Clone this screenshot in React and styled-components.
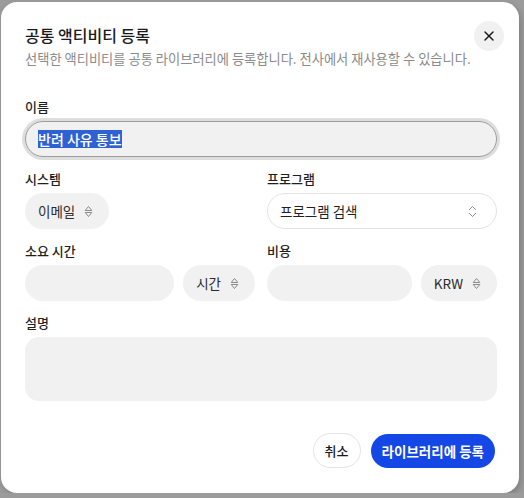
import styled, { createGlobalStyle } from "styled-components";
import { X, ChevronsUpDown } from "lucide-react";

const GlobalStyle = createGlobalStyle`
  html, body {
    margin: 0;
    padding: 0;
    background: #9b9b9b;
  }
  body {
    font-family: "Noto Sans CJK KR", "Noto Sans", sans-serif;
    color: #1c1c1c;
  }
`;

const SortIcon = () => (
  <svg width="9" height="13" viewBox="0 0 9 13" fill="none" stroke="#8a8a8a" strokeWidth="1" strokeLinejoin="round">
    <path d="M1.2 5.5 L4.5 1.5 L7.8 5.5 Z" />
    <path d="M1.2 7.5 L4.5 11.5 L7.8 7.5 Z" />
  </svg>
);

const App = () => (
  <>
    <GlobalStyle />
    <Dialog>
      <Header>
        <div>
          <Title>공통 액티비티 등록</Title>
          <Subtitle>선택한 액티비티를 공통 라이브러리에 등록합니다. 전사에서 재사용할 수 있습니다.</Subtitle>
        </div>
        <CloseButton aria-label="닫기">
          <X size={16} strokeWidth={2.2} />
        </CloseButton>
      </Header>

      <Form>
        <Field>
          <Label>이름</Label>
          <TextBox focused>
            <Selected>반려 사유 통보</Selected>
          </TextBox>
        </Field>

        <Grid>
          <Field>
            <Label>시스템</Label>
            <Row>
              <Pill>
                이메일 <SortIcon />
              </Pill>
            </Row>
          </Field>
          <Field>
            <Label>프로그램</Label>
            <Combo>
              <span>프로그램 검색</span>
              <ChevronsUpDown size={15} color="#8f8f8f" strokeWidth={1.6} />
            </Combo>
          </Field>
          <Field>
            <Label>소요 시간</Label>
            <Row>
              <TextBox grow />
              <Pill>
                시간 <SortIcon />
              </Pill>
            </Row>
          </Field>
          <Field>
            <Label>비용</Label>
            <Row>
              <TextBox grow />
              <Pill>
                KRW <SortIcon />
              </Pill>
            </Row>
          </Field>
        </Grid>

        <Field>
          <Label>설명</Label>
          <TextArea />
        </Field>
      </Form>

      <Footer>
        <GhostButton>취소</GhostButton>
        <PrimaryButton>라이브러리에 등록</PrimaryButton>
      </Footer>
    </Dialog>
  </>
);

const Dialog = styled.div`
  box-sizing: border-box;
  width: 518px;
  height: 491px;
  margin: 2px 0 0 1px;
  background: #fff;
  border-radius: 16px;
  padding: 21px 22px 0 24px;
  display: flex;
  flex-direction: column;
  box-shadow: 2px 3px 6px rgba(0, 0, 0, 0.18);
`;

const Header = styled.div`
  display: flex;
  justify-content: space-between;
  align-items: flex-start;
`;

const Title = styled.h2`
  margin: 0;
  font-size: 16px;
  line-height: 24px;
  font-weight: 500;
  color: #1a1a1a;
`;

const Subtitle = styled.p`
  margin: 2px 0 0;
  font-size: 13.25px;
  line-height: 20px;
  color: #8b8b8b;
`;

const CloseButton = styled.button`
  width: 30px;
  height: 30px;
  margin-top: -2px;
  margin-right: -7px;
  border: none;
  border-radius: 50%;
  background: #f1f1f1;
  color: #1a1a1a;
  display: flex;
  align-items: center;
  justify-content: center;
  padding: 0;
`;

const Form = styled.div`
  margin-top: 29px;
  display: flex;
  flex-direction: column;
  gap: 13px;
`;

const Grid = styled.div`
  display: grid;
  grid-template-columns: 1fr 1fr;
  column-gap: 12px;
  row-gap: 13px;
`;

const Field = styled.div`
  display: flex;
  flex-direction: column;
  gap: 5px;
`;

const Label = styled.label`
  font-size: 13px;
  line-height: 18px;
  font-weight: 500;
  color: #1f1f1f;
`;

const Row = styled.div`
  display: flex;
  gap: 9px;
`;

const TextBox = styled.div`
  box-sizing: border-box;
  flex: ${({ grow }) => (grow ? "1 1 0" : "none")};
  min-width: 0;
  height: 36px;
  border-radius: 18px;
  background: #f1f1f1;
  display: flex;
  align-items: center;
  padding: 0 12px;
  font-size: 14px;
  border: 1px solid ${({ focused }) => (focused ? "#9c9c9c" : "transparent")};
  box-shadow: ${({ focused }) => (focused ? "0 0 0 3px #dedede" : "none")};
`;

const Selected = styled.span`
  background: #2e62d2;
  color: #fff;
  font-size: 14px;
  line-height: 18px;
  font-weight: 500;
`;

const Pill = styled.div`
  box-sizing: border-box;
  flex: none;
  height: 36px;
  border-radius: 18px;
  background: #f1f1f1;
  display: flex;
  align-items: center;
  gap: 9px;
  padding: 0 16px 0 13px;
  font-size: 13.5px;
  color: #2a2a2a;
`;

const Combo = styled.div`
  box-sizing: border-box;
  height: 36px;
  border-radius: 18px;
  border: 1px solid #e3e3e3;
  background: #fff;
  display: flex;
  align-items: center;
  justify-content: space-between;
  padding: 0 16px 0 12px;
  font-size: 13.5px;
  color: #1f1f1f;
`;

const TextArea = styled.div`
  height: 64px;
  border-radius: 14px;
  background: #f1f1f1;
`;

const Footer = styled.div`
  margin-top: 32px;
  display: flex;
  justify-content: flex-end;
  gap: 10px;
  padding-right: 2px;
`;

const GhostButton = styled.button`
  box-sizing: border-box;
  height: 35px;
  width: 48px;
  border-radius: 18px;
  border: 1px solid #e4e4e4;
  background: #fff;
  font-family: inherit;
  font-size: 13px;
  font-weight: 500;
  color: #1a1a1a;
  padding: 0;
`;

const PrimaryButton = styled.button`
  box-sizing: border-box;
  height: 34px;
  margin-top: 1px;
  padding: 0 11px;
  border-radius: 17px;
  border: none;
  background: #1447e6;
  font-family: inherit;
  font-size: 13.5px;
  font-weight: 700;
  color: #fff;
`;

export default App;
